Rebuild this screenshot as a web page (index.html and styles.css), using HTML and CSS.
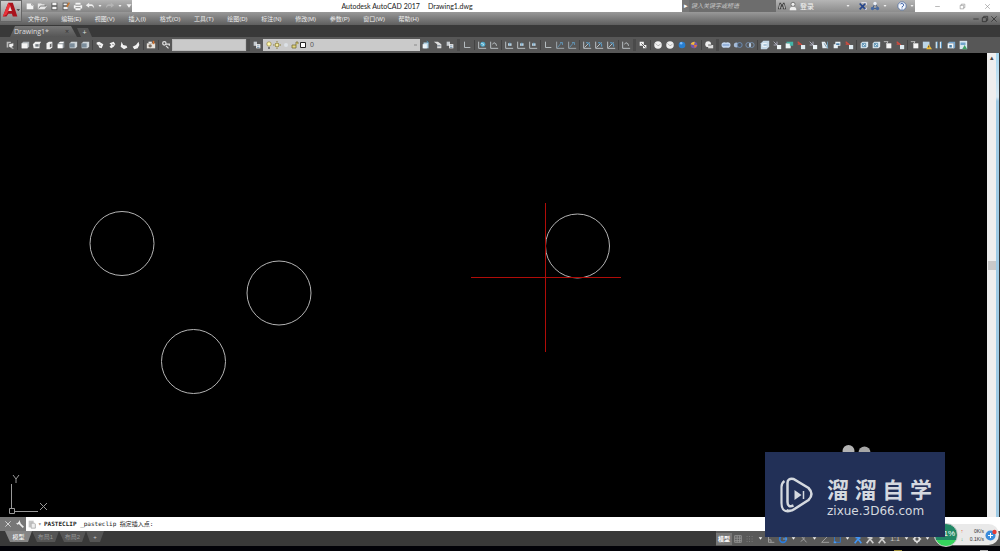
FILE: index.html
```html
<!DOCTYPE html>
<html lang="zh-CN">
<head>
<meta charset="utf-8">
<title>Autodesk AutoCAD 2017 - Drawing1.dwg</title>
<link rel="stylesheet" href="styles.css">
</head>
<body>
<svg class="defs" aria-hidden="true">
  <symbol id="new" viewBox="0 0 12 12"><path d="M2 3h6l2 2v5H2z" fill="#f4f4f4"/><path d="M8 3v2h2" fill="none" stroke="#888"/></symbol>
  <symbol id="open" viewBox="0 0 12 12"><path d="M1 3h4l1 1h3v2h3L9 10H1z" fill="#e6e6e6"/><path d="M2 9l2-3h7" fill="none" stroke="#666"/></symbol>
  <symbol id="save" viewBox="0 0 12 12"><path d="M3 2h7v9H3z" fill="#555"/><path d="M4 2h5v3H4zM4 7h5v3H4z" fill="#f2f2f2"/></symbol>
  <symbol id="saveas" viewBox="0 0 12 12"><path d="M2 2h6v9H2z" fill="#555"/><path d="M3 3h4v2H3zM3 7h5v3H3z" fill="#f2f2f2"/><path d="M10 2L7 7" stroke="#c87a35" stroke-width="2"/></symbol>
  <symbol id="print" viewBox="0 0 12 12"><path d="M3 2h6v3H3zM1 5h10v4H1zM3 8h6v3H3z" fill="#f4f4f4"/><path d="M3 5h6M3 8h6" stroke="#777"/></symbol>
  <symbol id="undo" viewBox="0 0 12 12"><path d="M1 5l4-3v2h3q3 1 3 5-1-3-3-3H5v2z" fill="#eee"/></symbol>
  <symbol id="redo" viewBox="0 0 12 12"><path d="M11 5L7 2v2H4Q1 5 1 9q1-3 3-3h3v2z" fill="#b5b5b5"/></symbol>
  <symbol id="down" viewBox="0 0 12 12"><path d="M3 4h6L6 8z" fill="#f2f2f2"/></symbol>
  <symbol id="named" viewBox="0 0 12 12"><path d="M2 2h5v2H4v5H2z" fill="#bbb"/><path d="M5 5l5-1v3L7 9 5 8z" fill="#eee"/><path d="M7 9l3 1" stroke="#eee"/></symbol>
  <symbol id="boxtop" viewBox="0 0 12 12"><path d="M2 4l2-2h7v6l-2 2H2z" fill="#aeb4b8"/><path d="M2 4h7v6H2z" fill="#f5f5f5"/></symbol>
  <symbol id="boxbot" viewBox="0 0 12 12"><path d="M1 5l3-3h7L9 5v5H2z" fill="#f0f0f0"/><path d="M4 5h4v3H4z" fill="#727a80"/></symbol>
  <symbol id="boxleft" viewBox="0 0 12 12"><path d="M3 4l3-2h4v7l-3 2H3z" fill="#f2f2f2"/><path d="M7 5l2-1v4L7 9z" fill="#666"/></symbol>
  <symbol id="boxfront" viewBox="0 0 12 12"><path d="M2 4l3-2h5v7l-2 1H2z" fill="#8d9499"/><path d="M2 5h6v5H2zM5 2h5L8 4H3z" fill="#fff"/></symbol>
  <symbol id="boxblue" viewBox="0 0 12 12"><path d="M2 4l2-2h7v6l-2 2H2z" fill="#cfd6da"/><path d="M2 4h6v5H2z" fill="#7b8d9b"/></symbol>
  <symbol id="iso1" viewBox="0 0 12 12"><path d="M2 3l3-1 5 3-2 5-3-1-1-3-2-1z" fill="#f2f2f2"/><path d="M5 6l2 1" stroke="#777"/></symbol>
  <symbol id="iso2" viewBox="0 0 12 12"><path d="M3 4l5-2 2 3-2 3-3 2-2-2 2-2z" fill="#f2f2f2"/><path d="M6 5l3 1" stroke="#888"/></symbol>
  <symbol id="iso3" viewBox="0 0 12 12"><path d="M3 2l2 4 4 1 1 2-4 2-4-3z" fill="#f2f2f2"/></symbol>
  <symbol id="iso4" viewBox="0 0 12 12"><path d="M9 2l1 4-2 4-4 1-2-3 4-2z" fill="#f2f2f2"/></symbol>
  <symbol id="camera" viewBox="0 0 12 12"><path d="M1 4h10v6H1z" fill="#e8e3dc"/><path d="M3 3h4" stroke="#eee" stroke-width="2"/><path d="M9 1v4" stroke="#d5732d" stroke-width="2"/><circle cx="5" cy="7" r="2" fill="#776b60"/></symbol>
  <symbol id="key" viewBox="0 0 12 12"><circle cx="4" cy="4" r="2" fill="none" stroke="#ddd" stroke-width="1.5"/><path d="M6 5h4v2M6 7l3 3" stroke="#ddd" stroke-width="1.5" fill="none"/></symbol>
  <symbol id="layers" viewBox="0 0 12 12"><path d="M2 2h4v5H2z" fill="#c7ccd0"/><path d="M5 5h5v5H5z" fill="#f5f5f5"/><path d="M6 7h3M6 9h3" stroke="#6585a0"/></symbol>
  <symbol id="sheet" viewBox="0 0 12 12"><path d="M3 3h6v7H3z" fill="#b2d3e6"/><path d="M2 5h5v5H2z" fill="#edf5fa"/><path d="M7 1l2 3" stroke="#4aa7d9"/></symbol>
  <symbol id="sheet2" viewBox="0 0 12 12"><path d="M1 2h5l4 3v5H5V5z" fill="#ddd"/><path d="M5 7h4" stroke="#567"/></symbol>
  <symbol id="ucs" viewBox="0 0 12 12"><path d="M3 2v7h7" fill="none" stroke="#c8d0d4"/></symbol>
  <symbol id="world" viewBox="0 0 12 12"><path d="M2 2v8h9" fill="none" stroke="#cbd2d6"/><circle cx="7" cy="5" r="3" fill="#51a9cb"/><path d="M5 4l3 1-1 2" stroke="#d4eef6" fill="none"/></symbol>
  <symbol id="ucsprev" viewBox="0 0 12 12"><path d="M2 2v8h9M4 5q4-4 5 2" fill="none" stroke="#cbd2d6"/></symbol>
  <symbol id="ucsdot" viewBox="0 0 12 12"><path d="M2 2v8h9" fill="none" stroke="#cbd2d6"/><path d="M5 4h4v3H5z" fill="#d4e4ef"/><path d="M7 3v4" stroke="#4e91bd"/></symbol>
  <symbol id="ucsarrow" viewBox="0 0 12 12"><path d="M2 2v8h9" fill="none" stroke="#aeb7bd"/><path d="M3 9l5-6M6 3h3v3" fill="none" stroke="#6299bd"/></symbol>
  <symbol id="ucsrot" viewBox="0 0 12 12"><path d="M2 2v8h9M3 9l6-6" fill="none" stroke="#ccd3d7"/><path d="M5 3q5 0 4 5" fill="none" stroke="#5b96bd" stroke-width="1.5"/></symbol>
  <symbol id="group" viewBox="0 0 12 12"><path d="M2 2h5v5H2zM6 6h4v4H6z" fill="#f4f4f4"/><path d="M4 4l5 5" stroke="#444"/></symbol>
  <symbol id="ball" viewBox="0 0 12 12"><circle cx="6" cy="6" r="4.500" fill="#f0f0f0"/><path d="M3 4l3 3 3-2" fill="none" stroke="#aaa"/></symbol>
  <symbol id="blueball" viewBox="0 0 12 12"><circle cx="6" cy="6" r="4" fill="#287fd1"/><circle cx="5" cy="4" r="1.5" fill="#79bafa"/></symbol>
  <symbol id="colorball" viewBox="0 0 12 12"><circle cx="6" cy="6" r="4" fill="#7456aa"/><path d="M2 5q1-3 5-3L6 6z" fill="#f3bf35"/><path d="M6 6h4L7 10z" fill="#e5792f"/></symbol>
  <symbol id="ballkey" viewBox="0 0 12 12"><circle cx="5" cy="5" r="3.5" fill="#eee"/><path d="M5 6h6v4H5z" fill="#ddd"/><path d="M5 6h4" stroke="#555"/></symbol>
  <symbol id="union" viewBox="0 0 12 12"><circle cx="4" cy="6" r="3.400" fill="#c3d7f0"/><circle cx="8" cy="6" r="3.400" fill="#c3d7f0"/><path d="M2 6h8" stroke="#567eb7"/></symbol>
  <symbol id="subtract" viewBox="0 0 12 12"><circle cx="4" cy="6" r="3" fill="#a6bbd7"/><circle cx="8" cy="6" r="3" fill="#4f5660" stroke="#7195bf"/></symbol>
  <symbol id="intersect" viewBox="0 0 12 12"><circle cx="4" cy="6" r="3" fill="none" stroke="#7998bb"/><circle cx="8" cy="6" r="3" fill="none" stroke="#7998bb"/><path d="M6 4v4" stroke="#c5d8ed" stroke-width="2"/></symbol>
  <symbol id="face" viewBox="0 0 12 12"><path d="M1 4l3-3h7v7l-3 3H1z" fill="#c5d8e6"/><path d="M3 4h5v4H3z" fill="#fff"/><path d="M4 6h4" stroke="#3b7cac"/></symbol>
  <symbol id="facemove" viewBox="0 0 12 12"><path d="M2 2l4 4M2 6h4V2" stroke="#bbc" fill="none"/><path d="M6 6h5v5H6z" fill="#edf4f7"/></symbol>
  <symbol id="facegreen" viewBox="0 0 12 12"><path d="M2 4h6v6H2z" fill="#edf5f6"/><path d="M3 2h8v5H7V4H3z" fill="#43b5a7"/></symbol>
  <symbol id="facered" viewBox="0 0 12 12"><path d="M2 2l5 4M2 5h4" stroke="#d24b3e" stroke-width="1.5"/><path d="M6 6h5v5H6z" fill="#dfeaf0"/></symbol>
  <symbol id="taper" viewBox="0 0 12 12"><path d="M2 2h4l4 8H3z" fill="#e5edf2"/><path d="M5 4l3 5" stroke="#6489a4"/><path d="M9 2v8" stroke="#6ea1bf"/></symbol>
  <symbol id="copyface" viewBox="0 0 12 12"><path d="M4 2h6v5H4zM2 5h5v5H2z" fill="#e9f2f7"/><path d="M5 4h4v2H5z" fill="#4b7fa8"/></symbol>
  <symbol id="imprint" viewBox="0 0 12 12"><path d="M2 4l2-2h7v6l-2 2H2z" fill="#d8e5ed"/><path d="M4 4h4v4H4zM4 4l4 4" fill="none" stroke="#4b86a9"/></symbol>
  <symbol id="clean" viewBox="0 0 12 12"><path d="M4 4h6v6H4z" fill="#f5f5f5"/><path d="M1 2h5L4 5" stroke="#ccc" fill="none"/></symbol>
  <symbol id="warning" viewBox="0 0 12 12"><path d="M1 2h8v8H1z" fill="#bcd5e6"/><path d="M8 5l4 6H5z" fill="#f2bd35"/><path d="M8 7v2" stroke="#333"/></symbol>
  <symbol id="bars" viewBox="0 0 12 12"><path d="M3 2v8M8 2v8" stroke="#dceaf3" stroke-width="2"/><path d="M4 2v8M9 2v8" stroke="#4f91c1"/></symbol>
  <symbol id="shell" viewBox="0 0 12 12"><path d="M2 4l2-2h7v7l-2 2V4z" fill="#77a7d0"/><path d="M2 4h7v6H2z" fill="#edf4f9"/><path d="M4 6h3v3H4z" fill="#497da7"/></symbol>
  <symbol id="picture" viewBox="0 0 12 12"><path d="M2 1h9v10H2z" fill="#d8e7ef"/><path d="M3 3h6v3H3z" fill="#71a5cb"/><path d="M5 11l3-5 3 5z" fill="#3fa063"/></symbol>
  <symbol id="bino" viewBox="0 0 12 12"><path d="M3 2h2v2h2V2h2l2 8H7V7H5v3H1z" fill="#444"/><path d="M4 4L3 9M8 4l1 5" stroke="#eee"/></symbol>
  <symbol id="person" viewBox="0 0 12 12"><circle cx="6" cy="4" r="2.5" fill="#eee" stroke="#666"/><path d="M2 11q0-4 4-4t4 4z" fill="#eee"/></symbol>
  <symbol id="exchange" viewBox="0 0 12 12"><path d="M2 3l7 7M9 3l-7 7" stroke="#24448b" stroke-width="2"/><path d="M4 2h6v3M8 10h2V8" stroke="#eef" fill="none"/></symbol>
  <symbol id="a360" viewBox="0 0 12 12"><path d="M6 3L3 9h7z" fill="none" stroke="#355486"/><circle cx="6" cy="3" r="2" fill="#eaf0fa"/><circle cx="3" cy="9" r="2" fill="#486aa1"/><circle cx="9" cy="9" r="2" fill="#486aa1"/></symbol>
  <symbol id="help" viewBox="0 0 12 12"><circle cx="6" cy="6" r="5" fill="#f4f7fc" stroke="#5471a2"/><path d="M4 4q0-1 2-1t2 2q0 1-2 2v1M6 9v1" stroke="#2850a0" fill="none"/></symbol>
  <symbol id="min" viewBox="0 0 12 12"><path d="M2 6h8" stroke="currentColor"/></symbol>
  <symbol id="restore" viewBox="0 0 12 12"><path d="M2 4h6v6H2zM4 4V2h6v6H8" stroke="currentColor" fill="none"/></symbol>
  <symbol id="close" viewBox="0 0 12 12"><path d="M2 2l8 8M10 2l-8 8" stroke="currentColor"/></symbol>
  <symbol id="wrench" viewBox="0 0 12 12"><path d="M4 4l7 7" stroke="#eee" stroke-width="2.5"/><path d="M5 0l2 5-5 2L0 4l2 1 2-2z" fill="#eee"/></symbol>
  <symbol id="paste" viewBox="0 0 12 12"><path d="M2 2h6v8H2z" fill="#c3c3c3"/><path d="M5 5h4l1 1v5H5z" fill="#eee" stroke="#aaa"/></symbol>
  <symbol id="grid" viewBox="0 0 12 12"><path d="M2 2h8v8H2zM5 2v8M8 2v8M2 5h8M2 8h8" stroke="#999" fill="none"/></symbol>
  <symbol id="dots" viewBox="0 0 12 12"><path d="M2 3h8M2 6h8M2 9h8" stroke="#888" stroke-dasharray="1 2"/></symbol>
  <symbol id="ortho" viewBox="0 0 12 12"><path d="M3 2v8h7M3 7h3v3" stroke="#aaa" fill="none"/></symbol>
  <symbol id="polar" viewBox="0 0 12 12"><circle cx="6" cy="6" r="4" stroke="#297bdd" fill="none" stroke-width="2"/><path d="M6 6h5" stroke="#6bb2ff"/></symbol>
  <symbol id="isodraft" viewBox="0 0 12 12"><path d="M2 2l7 8M6 6V2M6 6L2 9" stroke="#aaa" fill="none"/></symbol>
  <symbol id="track" viewBox="0 0 12 12"><path d="M10 2L2 10h9" stroke="#aaa" fill="none"/></symbol>
  <symbol id="osnap" viewBox="0 0 12 12"><path d="M3 3h7v7H3z" stroke="#297bdd" fill="none"/><path d="M2 9h3v2H2z" fill="#4b9bf0"/></symbol>
  <symbol id="annot" viewBox="0 0 12 12"><path d="M6 1v5L2 11M6 6l4 5M3 4l6 1" stroke="currentColor" stroke-width="2" fill="none"/></symbol>
  <symbol id="gear" viewBox="0 0 12 12"><circle cx="6" cy="6" r="3" fill="none" stroke="#ddd" stroke-width="2"/><path d="M6 1v2M6 9v2M1 6h2M9 6h2" stroke="#ddd" stroke-width="2"/></symbol>
</svg>

<div class="app">
  <header class="head">
    <button class="logo" aria-label="应用程序菜单"><svg viewBox="0 0 22 22"><path d="M2 17L8 2h5l5 15h-5l-1-3H8l-2 3z" fill="#a9131c"/><path d="M8 2L2 17l4-2 5-9z" fill="#e8323a"/><path d="M8 11h4l-2-5z" fill="#ddd"/><path d="M17 9h4l-2 2z" fill="#333"/></svg></button>
    <div class="head-rows">
      <div class="titlebar">
        <div class="quick">
          <button aria-label="新建"><svg><use href="#new"/></svg></button><button aria-label="打开"><svg><use href="#open"/></svg></button><button aria-label="保存"><svg><use href="#save"/></svg></button><button aria-label="另存为"><svg><use href="#saveas"/></svg></button><button aria-label="打印"><svg><use href="#print"/></svg></button><button aria-label="放弃"><svg><use href="#undo"/></svg></button><button class="tiny" aria-label="放弃列表"><svg><use href="#down"/></svg></button><button aria-label="重做"><svg><use href="#redo"/></svg></button><button class="tiny" aria-label="重做列表"><svg><use href="#down"/></svg></button><button class="more" aria-label="自定义"><svg><use href="#down"/></svg></button>
        </div>
        <h1 class="title"><span>Autodesk AutoCAD 2017</span><span>Drawing1.dwg</span></h1>
        <div class="info">
          <button class="expand" aria-label="展开">▸</button>
          <input class="search" aria-label="搜索" placeholder="键入关键字或短语">
          <button aria-label="查找"><svg><use href="#bino"/></svg></button>
          <button class="login"><svg><use href="#person"/></svg>登录</button>
          <button class="tiny" aria-label="登录菜单"><svg><use href="#down"/></svg></button>
          <button aria-label="Exchange"><svg><use href="#exchange"/></svg></button><button aria-label="A360"><svg><use href="#a360"/></svg></button><button class="tiny" aria-label="A360 菜单"><svg><use href="#down"/></svg></button>
          <button class="help" aria-label="帮助"><svg><use href="#help"/></svg></button><button class="tiny" aria-label="帮助菜单"><svg><use href="#down"/></svg></button>
        </div>
        <div class="window">
          <button aria-label="最小化"><svg><use href="#min"/></svg></button><button aria-label="还原"><svg><use href="#restore"/></svg></button><button aria-label="关闭"><svg><use href="#close"/></svg></button>
        </div>
      </div>
      <nav class="menu">
        <div class="menu-items"><button>文件(F)</button><button>编辑(E)</button><button>视图(V)</button><button>插入(I)</button><button>格式(O)</button><button>工具(T)</button><button>绘图(D)</button><button>标注(N)</button><button>修改(M)</button><button>参数(P)</button><button>窗口(W)</button><button>帮助(H)</button></div>
        <div class="docwin"><button aria-label="最小化图形"><svg><use href="#min"/></svg></button><button aria-label="还原图形"><svg><use href="#restore"/></svg></button><button aria-label="关闭图形"><svg><use href="#close"/></svg></button></div>
      </nav>
    </div>
  </header>

  <div class="files">
    <button class="file">Drawing1*<span>×</span></button><button class="addfile" aria-label="新图形">+</button>
  </div>

  <div class="tools">
    <button aria-label="命名视图"><svg><use href="#named"/></svg></button><i class="sep"></i>
    <button aria-label="俯视"><svg><use href="#boxtop"/></svg></button><button aria-label="仰视"><svg><use href="#boxbot"/></svg></button><button aria-label="左视"><svg><use href="#boxleft"/></svg></button><button aria-label="右视"><svg><use href="#boxfront"/></svg></button><button aria-label="前视"><svg><use href="#boxblue"/></svg></button><button aria-label="后视"><svg><use href="#boxblue"/></svg></button><i class="sep"></i>
    <button aria-label="西南等轴测"><svg><use href="#iso1"/></svg></button><button aria-label="东南等轴测"><svg><use href="#iso2"/></svg></button><button aria-label="东北等轴测"><svg><use href="#iso3"/></svg></button><button aria-label="西北等轴测"><svg><use href="#iso4"/></svg></button><i class="sep"></i>
    <button aria-label="相机"><svg><use href="#camera"/></svg></button><i class="sep"></i><button aria-label="上一个视图"><svg><use href="#key"/></svg></button>
    <select class="viewlist" aria-label="视图"><option></option></select><i class="grip"></i>
    <button aria-label="图层特性"><svg><use href="#layers"/></svg></button>
    <div class="layer">
      <svg viewBox="0 0 45 12" aria-hidden="true"><circle cx="6" cy="5" r="2.2" fill="#fff8ad" stroke="#948441" stroke-width=".7"/><path d="M5 8h2v2H5z" fill="#777"/><circle cx="14" cy="6" r="2" fill="#f7eca1" stroke="#8f8342"/><path d="M14 2v1M14 9v1M10 6h1M17 6h1" stroke="#8f8342"/><circle cx="23" cy="6" r="2" fill="#dce1e6"/><path d="M29 6h4v3h-4zM33 6V3h2v2" fill="#e3d77c" stroke="#776d38" stroke-width=".8"/><path d="M37.500 3.500h5v5h-5z" fill="#fff" stroke="#222"/></svg>
      <select aria-label="图层"><option>0</option></select>
    </div>
    <button aria-label="置为当前"><svg><use href="#sheet"/></svg></button><button aria-label="上一个图层"><svg><use href="#sheet2"/></svg></button><button aria-label="图层状态"><svg><use href="#layers"/></svg></button><i class="grip"></i>
    <button aria-label="UCS"><svg><use href="#ucs"/></svg></button><i class="sep"></i><button aria-label="世界"><svg><use href="#world"/></svg></button><button aria-label="上一个 UCS"><svg><use href="#ucsprev"/></svg></button><i class="sep"></i>
    <button aria-label="面 UCS"><svg><use href="#ucsdot"/></svg></button><button aria-label="对象"><svg><use href="#ucsdot"/></svg></button><button aria-label="视图 UCS"><svg><use href="#ucsdot"/></svg></button><i class="sep"></i>
    <button aria-label="原点"><svg><use href="#ucs"/></svg></button><button aria-label="Z 轴矢量"><svg><use href="#ucsarrow"/></svg></button><button aria-label="三点"><svg><use href="#ucsarrow"/></svg></button><i class="sep"></i>
    <button aria-label="X"><svg><use href="#ucsrot"/></svg></button><button aria-label="Y"><svg><use href="#ucsrot"/></svg></button><button aria-label="Z"><svg><use href="#ucsrot"/></svg></button><i class="sep"></i><button aria-label="应用"><svg><use href="#ucsprev"/></svg></button><i class="grip"></i>
    <button aria-label="二维线框"><svg><use href="#group"/></svg></button><i class="sep"></i><button aria-label="三维线框"><svg><use href="#ball"/></svg></button><button aria-label="三维隐藏"><svg><use href="#ball"/></svg></button><button aria-label="真实"><svg><use href="#blueball"/></svg></button><button aria-label="概念"><svg><use href="#colorball"/></svg></button><i class="sep"></i><button aria-label="视觉样式"><svg><use href="#ballkey"/></svg></button><i class="grip"></i>
    <button aria-label="并集"><svg><use href="#union"/></svg></button><button aria-label="差集"><svg><use href="#subtract"/></svg></button><button aria-label="交集"><svg><use href="#intersect"/></svg></button><i class="sep"></i>
    <button aria-label="拉伸面"><svg><use href="#face"/></svg></button><button aria-label="移动面"><svg><use href="#facemove"/></svg></button><button aria-label="偏移面"><svg><use href="#facegreen"/></svg></button><button aria-label="删除面"><svg><use href="#facered"/></svg></button><button aria-label="旋转面"><svg><use href="#facemove"/></svg></button><button aria-label="倾斜面"><svg><use href="#taper"/></svg></button><button aria-label="复制面"><svg><use href="#copyface"/></svg></button><button aria-label="着色面"><svg><use href="#facered"/></svg></button><i class="sep"></i>
    <button aria-label="复制边"><svg><use href="#imprint"/></svg></button><button aria-label="着色边"><svg><use href="#imprint"/></svg></button><button aria-label="压印"><svg><use href="#clean"/></svg></button><button aria-label="清除"><svg><use href="#facered"/></svg></button><i class="sep"></i>
    <button aria-label="分割"><svg><use href="#clean"/></svg></button><button aria-label="抽壳"><svg><use href="#warning"/></svg></button><button aria-label="检查"><svg><use href="#bars"/></svg></button><button aria-label="复制"><svg><use href="#shell"/></svg></button><button aria-label="渲染"><svg><use href="#picture"/></svg></button>
  </div>

  <main class="work">
    <svg class="drawing" role="img" aria-label="图形窗口">
      <g fill="none" stroke="#b4b4b4"><circle cx="122" cy="190.500" r="32"/><circle cx="279" cy="240" r="32"/><circle cx="193.500" cy="308.500" r="32"/><circle cx="577.500" cy="193" r="32"/></g>
      <path d="M545.500 150v149M471 224.500h150" stroke="#b00c08" fill="none"/>
      <path d="M11.500 431v25M14 458.500h24M9.500 455.500h5v5h-5zM13 422l3 4 3-4M16 426v4M40 450l7 7M47 450l-7 7" stroke="#999" fill="none"/>
      <circle cx="848.500" cy="398" r="6" fill="#b3b3b3"/><circle cx="864.500" cy="399.500" r="6" fill="#a6a6a6"/>
    </svg>
    <div class="scroll"><span>▴</span><i></i></div>
    <div class="edge"></div>
  </main>

  <div class="command">
    <div class="cmdhandle"><button aria-label="关闭命令行"><svg><use href="#close"/></svg></button><button aria-label="自定义命令行"><svg><use href="#wrench"/></svg></button></div>
    <button aria-label="最近使用的命令"><svg><use href="#paste"/></svg></button><span class="caret">▾</span>
    <p><b>PASTECLIP</b> _pasteclip 指定插入点:</p>
  </div>

  <footer class="status">
    <div class="layouts"><button class="on">模型</button><button>布局1</button><button>布局2</button><button class="plus" aria-label="新建布局">+</button></div>
    <div class="modes">
      <button class="model">模型</button><button aria-label="栅格"><svg><use href="#grid"/></svg></button><button aria-label="捕捉"><svg><use href="#dots"/></svg></button><button class="slim" aria-label="捕捉菜单"><svg><use href="#down"/></svg></button>
      <button aria-label="正交"><svg><use href="#ortho"/></svg></button><button aria-label="极轴"><svg><use href="#polar"/></svg></button><button class="slim" aria-label="极轴菜单"><svg><use href="#down"/></svg></button>
      <button aria-label="等轴测"><svg><use href="#isodraft"/></svg></button><button class="slim" aria-label="等轴测菜单"><svg><use href="#down"/></svg></button><button aria-label="追踪"><svg><use href="#track"/></svg></button><button aria-label="对象捕捉"><svg><use href="#osnap"/></svg></button><button class="slim" aria-label="捕捉选项"><svg><use href="#down"/></svg></button>
      <button class="blue" aria-label="注释可见性"><svg><use href="#annot"/></svg></button><button aria-label="自动缩放"><svg><use href="#annot"/></svg></button><button aria-label="注释比例"><svg><use href="#annot"/></svg></button><button class="scale">1:1</button><button class="slim" aria-label="比例菜单"><svg><use href="#down"/></svg></button><button aria-label="工作空间"><svg><use href="#gear"/></svg></button><button class="slim" aria-label="工作空间菜单"><svg><use href="#down"/></svg></button>
    </div>
  </footer>
  <div class="taskbar"><i class="gold"></i><i></i></div>

  <aside class="net">
    <div class="ball">1%</div>
    <div class="arrows"><span>↑</span><span>↓</span></div>
    <div class="rates"><span>0K/s</span><span>0.1K/s</span></div>
    <svg viewBox="0 0 12 12" aria-hidden="true"><circle cx="5.500" cy="6.500" r="5" fill="#3a8cdc"/><path d="M5.500 4v5M3 6.500h5" stroke="#fff"/><circle cx="9.500" cy="3" r="2.200" fill="#e53b35"/></svg>
  </aside>
  <aside class="watermark">
    <svg viewBox="0 0 34 36" aria-hidden="true"><path d="M4 4Q1 6 1 10v16q0 10 9 8" fill="none" stroke="#d5d9df" stroke-width="2.200"/><path d="M13 28.500Q7 31 7 25V6q0-5 6-4l15 9q6 6 0 12l-14 9q-4 3-8 1" fill="none" stroke="#d5d9df" stroke-width="2.500"/><path d="M14 13l7 5-7 5z" fill="#d5d9df"/><path d="M23 14v8" stroke="#d5d9df" stroke-width="1.500"/></svg>
    <div class="brand"><strong><span>溜</span><span>溜</span><span>自</span><span>学</span></strong><span>zixue.3D66.com</span></div>
  </aside>
</div>
</body>
</html>
```
FILE: styles.css
```css
* { box-sizing: border-box; }
body { margin: 0; background: #000; font-family: "Liberation Sans", "Noto Sans CJK SC", sans-serif; font-size: 7px; color: #ddd; }
button { display: flex; align-items: center; justify-content: center; flex: none; margin: 0; padding: 0; border: 0; background: none; color: inherit; font: inherit; white-space: nowrap; }
button svg { width: 10px; height: 10px; display: block; }
.defs { display: none; }
.app { position: relative; display: flex; flex-direction: column; height: 100vh; overflow: hidden; }

.head { display: flex; height: 25px; background: linear-gradient(#fff 12px, #999 12px, #5e5e5e 25px); }
.logo { width: 22px; height: 22px; background: linear-gradient(#cecece, #888); border: 1px solid #666; }
.logo svg { width: 20px; height: 20px; }
.head-rows { flex: 1; min-width: 0; }
.titlebar { display: flex; height: 12px; align-items: stretch; }
.quick { display: flex; align-items: center; width: 110px; padding-left: 2px; background: linear-gradient(#b3b3b3, #858585); }
.quick button { width: 12px; }
.quick .more { width: 10px; }
.tiny svg { width: 6px; height: 6px; }
.quick .tiny { width: 8px; }
.title { display: flex; flex: 1; justify-content: center; gap: 8px; margin: 0; color: #222; font: 7px/12px Lato, sans-serif; white-space: nowrap; }
.info { display: flex; align-items: center; width: 233px; background: linear-gradient(#b5b5b5, #8c8c8c); }
.expand { width: 7px; height: 12px; background: #777; color: #fff; }
.search { width: 94px; height: 12px; padding: 0 2px; border: 0; background: #6d6d6d; font: italic 6px/12px "Noto Sans CJK SC", sans-serif; }
.search::placeholder { color: #c8c8c8; }
.info button:not(.expand, .tiny, .login) { width: 12px; }
.login { gap: 2px; color: #f4f4f4; }
.info .tiny { width: 7px; }
.login + .tiny { margin-left: 30px; margin-right: 6px; }
.info .help { margin-left: 8px; }
.window { display: flex; justify-content: space-around; width: 85px; padding-left: 10px; color: #888; }
.window svg { width: 7px; height: 7px; }
.menu { display: flex; align-items: center; height: 13px; padding-left: 6px; font-size: 6px; color: #eee; }
.menu-items { display: flex; justify-content: space-between; width: 391px; }
.docwin { display: flex; gap: 1px; margin-left: auto; padding-right: 2px; color: #222; }
.docwin button { min-width: 8px; }
.docwin svg { width: 8px; height: 8px; }

.files { display: flex; align-items: flex-end; height: 12px; padding-left: 10px; background: #393939; }
.file { width: 67px; height: 11px; padding-right: 4px; gap: 16px; background: linear-gradient(#777, #555); clip-path: polygon(5px 0, 61px 0, 100% 100%, 0 100%); font-family: "Open Sans", sans-serif; }
.file span { color: #333; }
.addfile { width: 15px; height: 9px; background: #555; clip-path: polygon(0 0, 11px 0, 100% 100%, 4px 100%); }

.tools { display: flex; align-items: center; height: 16px; padding: 0 4px; background: #575757; overflow: hidden; }
.tools button { width: 12px; }
.sep { flex: none; width: 1px; height: 10px; margin: 0 1px; background: #434343; }
.grip { flex: none; width: 3px; height: 12px; margin: 0 1px; background: #4a4a4a; }
.tools select { height: 12px; margin: 0; padding: 0 2px; border: 1px solid #bbb; border-radius: 0; background: #cacaca; color: #555; font: 7px/10px "Liberation Sans", sans-serif; appearance: none; }
.tools .viewlist { flex: none; width: 74px; }
.layer { display: flex; flex: none; align-items: center; width: 157px; background: #cacaca; }
.layer svg { flex: none; width: 45px; height: 12px; }
.layer select { flex: 1; border: 0; background: linear-gradient(#aaa, #aaa) right 3px center / 3px 2px no-repeat #cacaca; }

.work { display: flex; flex: 1; min-height: 0; background: #000; }
.drawing { flex: 1; min-width: 0; height: 100%; }
.scroll { display: flex; flex-direction: column; align-items: center; width: 9px; background: #eee; color: #444; line-height: 10px; }
.scroll i { width: 8px; height: 9px; margin-top: 198px; background: #c9c9c9; }
.edge { width: 4px; background: linear-gradient(#a8d8f0, #d7e9f3 44px, #9fcbe5 48px); border-right: 1px solid #333; }

.command { display: flex; align-items: center; height: 14px; background: #fff; color: #222; font: 6px/14px "DejaVu Sans Mono", "Noto Sans CJK SC", monospace; }
.cmdhandle { display: flex; align-items: center; width: 26px; height: 14px; padding-left: 2px; background: #777; color: #fff; }
.cmdhandle button { width: 12px; }
.cmdhandle svg { width: 8px; height: 8px; }
.command > button { width: 12px; color: #aaa; }
.caret { width: 6px; color: #888; }
.command p { margin: 0; white-space: nowrap; }

.status { display: flex; justify-content: space-between; height: 15px; background: #393939; }
.layouts { display: flex; padding-left: 5px; }
.layouts button { width: 27px; height: 11px; background: #555; clip-path: polygon(0 0, 100% 0, 23px 100%, 5px 100%); color: #999; font-size: 6px; }
.layouts .on { background: #858585; color: #fff; }
.layouts .plus { width: 18px; clip-path: polygon(0 0, 100% 0, 14px 100%, 4px 100%); color: #ccc; }
.modes { display: flex; align-items: center; width: 284px; background: #595959; color: #ccc; }
.modes button { width: 12px; }
.modes .model { width: 16px; height: 12px; background: #777; color: #fff; font-size: 6px; font-weight: bold; }
.modes .slim { width: 9px; }
.modes .slim svg { width: 7px; height: 7px; }
.modes .blue { color: #4295f4; }
.modes .scale { width: 14px; }
.taskbar { display: flex; justify-content: flex-end; align-items: flex-end; gap: 78px; height: 5px; padding-right: 12px; background: #020208; }
.taskbar i { width: 8px; height: 1px; background: #aaa; }
.taskbar .gold { background: #9b8c38; }

.net { position: absolute; right: 1px; bottom: 6px; display: flex; align-items: center; gap: 1px; width: 65px; height: 21px; padding-right: 2px; border-radius: 11px; background: #e9e9e9; color: #333; font-size: 5px; line-height: 8px; }
.ball { flex: none; width: 24px; height: 24px; border: 1px solid #ccc; border-radius: 50%; background: linear-gradient(#218865 75%, #35d45c 75%); color: #fff; font-size: 8px; line-height: 20px; text-align: right; padding-right: 2px; }
.arrows { display: flex; flex-direction: column; width: 6px; text-align: center; color: #2c9967; }
.arrows span:first-child { color: #e65d3d; }
.rates { display: flex; flex: 1; flex-direction: column; text-align: right; }
.net svg { flex: none; width: 12px; height: 12px; }
.watermark { position: absolute; right: 55px; bottom: 14px; display: flex; align-items: center; gap: 12px; width: 180px; height: 85px; padding-left: 15px; background: #223057; color: #d5d9df; }
.watermark svg { flex: none; width: 35px; height: 36px; }
.brand { display: flex; flex-direction: column; width: 105px; }
.brand strong { display: flex; justify-content: space-between; font: bold 22px/32px "Noto Sans CJK SC", sans-serif; }
.brand > span { font: 12px/14px "DejaVu Sans", sans-serif; white-space: nowrap; }
```
